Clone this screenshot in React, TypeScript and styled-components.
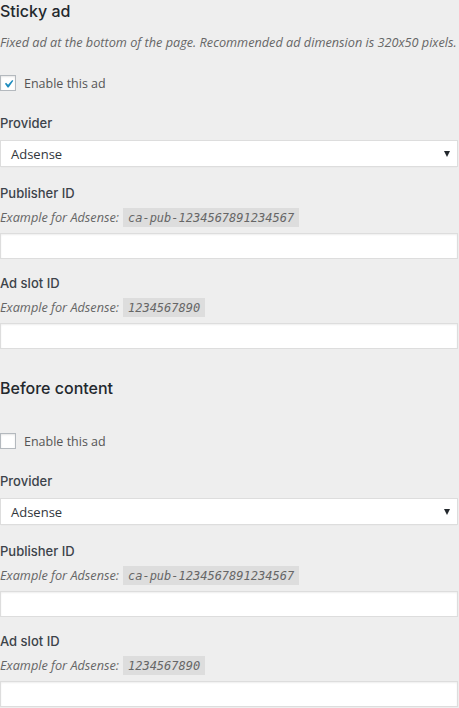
import React from "react";
import styled, { createGlobalStyle } from "styled-components";

const GlobalStyle = createGlobalStyle`
  html, body {
    margin: 0;
    padding: 0;
    background: #eeeeee;
    overflow: hidden;
  }
  body {
    font-family: "Open Sans", "Noto Sans", sans-serif;
    color: #23282d;
    font-size: 13px;
  }
`;

const Page = styled.div`
  width: 458px;
  display: flex;
  flex-direction: column;
`;

const Section = styled.section<{ $first?: boolean }>`
  display: flex;
  flex-direction: column;
  margin-top: ${p => (p.$first ? "0" : "28px")};
`;

const Heading = styled.h2`
  margin: 0;
  font-family: "Inter", "Open Sans", sans-serif;
  font-size: 16px;
  font-weight: 550;
  line-height: 22px;
  color: #23282d;
`;

const Description = styled.p`
  margin: 11px 0 0;
  font-size: 12.7px;
  font-style: italic;
  line-height: 18px;
  color: #666;
  white-space: nowrap;
`;

const CheckRow = styled.label<{ $gap: number }>`
  display: flex;
  align-items: center;
  gap: 8px;
  margin-top: ${p => p.$gap}px;
  font-size: 12.5px;
  color: #555;
  height: 16px;
`;

const Box = styled.span`
  width: 16px;
  height: 16px;
  box-sizing: border-box;
  border: 1px solid #b4b9be;
  background: #fff;
  box-shadow: inset 0 1px 2px rgba(0, 0, 0, 0.1);
  display: flex;
  align-items: center;
  justify-content: center;
`;

const Field = styled.div<{ $gap: number }>`
  display: flex;
  flex-direction: column;
  margin-top: ${p => p.$gap}px;
`;

const Label = styled.div`
  font-family: "Inter", "Open Sans", sans-serif;
  font-size: 13px;
  font-weight: 550;
  line-height: 18px;
  color: #3c434a;
`;

const Example = styled.div`
  margin-top: 6px;
  font-size: 12.7px;
  font-style: italic;
  line-height: 18px;
  height: 18px;
  color: #666;
  white-space: nowrap;
`;

const Code = styled.code`
  font-family: "DejaVu Sans Mono", "Liberation Mono", monospace;
  font-size: 12px;
  font-style: italic;
  background: rgba(0, 0, 0, 0.07);
  padding: 3px 5px 2px;
  margin-left: 4px;
  color: #666;
`;

const Input = styled.div`
  margin-top: 7px;
  height: 26px;
  box-sizing: border-box;
  background: #fff;
  border: 1px solid #ddd;
  box-shadow: inset 0 1px 2px rgba(0, 0, 0, 0.07);
`;

const Select = styled.div`
  margin-top: 8px;
  height: 27px;
  box-sizing: border-box;
  background: #fff;
  border: 1px solid #ddd;
  box-shadow: 0 1px 1px -1px rgba(0, 0, 0, 0.1);
  display: flex;
  align-items: center;
  justify-content: space-between;
  padding: 0 7px 0 10px;
  font-size: 13px;
  color: #32373c;
`;

const Arrow = styled.span`
  width: 0;
  height: 0;
  border-left: 3.5px solid transparent;
  border-right: 3.5px solid transparent;
  border-top: 6px solid #23282d;
`;

const Check = () => (
  <svg width="14" height="14" viewBox="0 0 20 20">
    <path
      d="M14.83 4.89l1.34.94-5.81 8.38H9.02L5.78 9.67l1.34-1.25 2.57 2.4z"
      fill="#1e8cbe"
      transform="translate(-1 0) scale(1.15)"
    />
  </svg>
);

const AdBlock = ({
  title,
  description,
  checked,
  first,
}: {
  title: string;
  description?: string;
  checked?: boolean;
  first?: boolean;
}) => (
  <Section $first={first}>
    <Heading>{title}</Heading>
    {description && <Description>{description}</Description>}
    <CheckRow $gap={description ? 24 : 34}>
      <Box>{checked && <Check />}</Box>
      Enable this ad
    </CheckRow>
    <Field $gap={23}>
      <Label>Provider</Label>
      <Select>
        Adsense
        <Arrow />
      </Select>
    </Field>
    <Field $gap={17}>
      <Label>Publisher ID</Label>
      <Example>
        Example for Adsense:<Code>ca-pub-1234567891234567</Code>
      </Example>
      <Input />
    </Field>
    <Field $gap={15}>
      <Label>Ad slot ID</Label>
      <Example>
        Example for Adsense:<Code>1234567890</Code>
      </Example>
      <Input />
    </Field>
  </Section>
);

export default function App() {
  return (
    <>
      <GlobalStyle />
      <Page>
        <AdBlock
          first
          checked
          title="Sticky ad"
          description="Fixed ad at the bottom of the page. Recommended ad dimension is 320x50 pixels."
        />
        <AdBlock title="Before content" />
      </Page>
    </>
  );
}
